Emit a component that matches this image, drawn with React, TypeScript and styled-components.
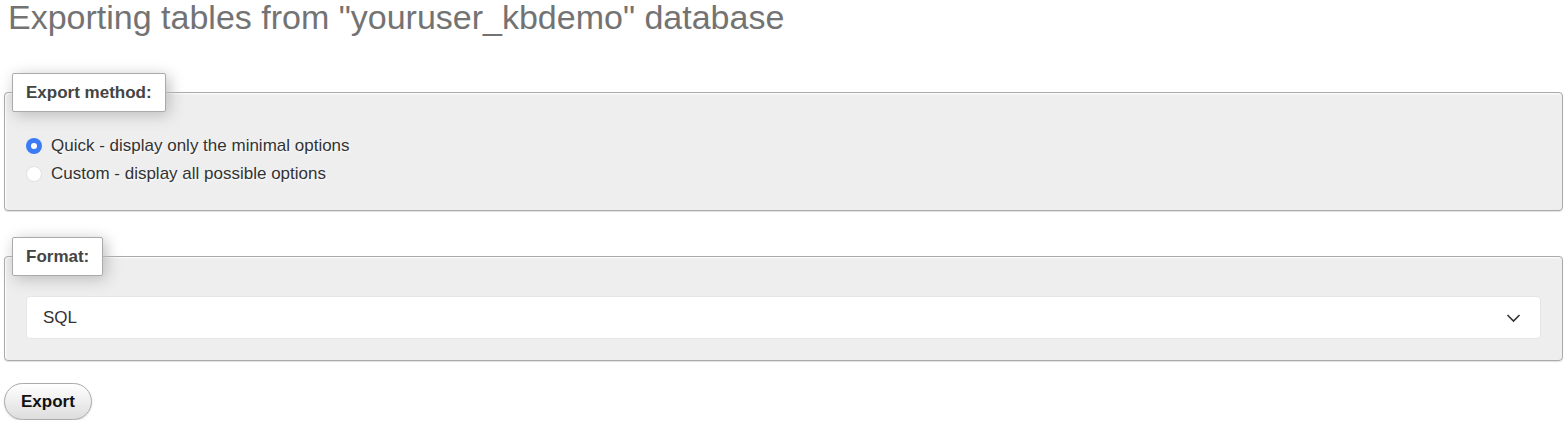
import React, { useState } from 'react';
import styled, { createGlobalStyle } from 'styled-components';

const GlobalStyle = createGlobalStyle`
    html, body {
        margin: 0;
        padding: 0;
        background: #fff;
    }
    body {
        font-family: "Liberation Sans", Arial, sans-serif;
        font-size: 17px;
        color: #333;
    }
`;

const Page = styled.div`
    padding: 0 4px;
`;

const Title = styled.h2`
    margin: 0 0 0 4px;
    font-size: 34px;
    font-weight: normal;
    line-height: 34px;
    color: #737373;
`;

const Panel = styled.fieldset<{ top: number }>`
    margin: ${({ top }) => top}px 0 0 0;
    padding: 12px 21px 21px 21px;
    border: 1px solid #aaa;
    border-radius: 4px;
    background: #eee;
    box-shadow: 1px 1px 2px #fff inset, 0 1px 1px rgba(0, 0, 0, 0.12);
    min-width: 0;
`;

const PanelTitle = styled.legend`
    margin-left: -14px;
    padding: 10px 13px 9px 13px;
    border: 1px solid #aaa;
    border-radius: 2px;
    background: #fff;
    box-shadow: 3px 3px 15px #bbb;
    font-weight: bold;
    font-size: 17px;
    line-height: 18px;
    color: #444;
`;

const OptionList = styled.div`
    display: flex;
    flex-direction: column;
    padding-top: 8px;
    padding-bottom: 1px;
`;

const OptionRow = styled.label`
    display: flex;
    align-items: center;
    gap: 9px;
    height: 28px;
    cursor: pointer;
    text-shadow: 1px 1px 2px #fff;
`;

const RadioDot = styled.span<{ checked: boolean }>`
    box-sizing: border-box;
    width: 16px;
    height: 16px;
    border-radius: 50%;
    flex: none;
    background: ${({ checked }) => (checked ? '#3b7cf5' : '#fff')};
    border: ${({ checked }) => (checked ? 'none' : '1px solid #e2e2e2')};
    display: flex;
    align-items: center;
    justify-content: center;

    &::after {
        content: '';
        width: 6px;
        height: 6px;
        border-radius: 50%;
        background: #fff;
        display: ${({ checked }) => (checked ? 'block' : 'none')};
    }
`;

const SelectBox = styled.div`
    margin-top: 8px;
    height: 43px;
    box-sizing: border-box;
    display: flex;
    align-items: center;
    justify-content: space-between;
    padding: 0 19px 0 16px;
    background: #fff;
    border: 1px solid #e6e6e6;
    border-radius: 4px;
    color: #333;
`;

const Chevron = styled.svg`
    width: 15px;
    height: 15px;
`;

const ExportButton = styled.button`
    margin-top: 22px;
    height: 37px;
    padding: 0 16px;
    font-family: "Liberation Sans", Arial, sans-serif;
    font-size: 17px;
    font-weight: bold;
    color: #111;
    border: 1px solid #aaa;
    border-radius: 20px;
    background: linear-gradient(#fff, #ddd);
    box-shadow: 0 1px 2px rgba(0, 0, 0, 0.15);
    cursor: pointer;
`;

const options = [
    { id: 'quick', label: 'Quick - display only the minimal options' },
    { id: 'custom', label: 'Custom - display all possible options' },
];

const App: React.FC = () => {
    const [method, setMethod] = useState('quick');

    return (
        <>
            <GlobalStyle />
            <Page>
                <Title>Exporting tables from "youruser_kbdemo" database</Title>
                <Panel top={39}>
                    <PanelTitle>Export method:</PanelTitle>
                    <OptionList>
                        {options.map((o) => (
                            <OptionRow key={o.id} onClick={() => setMethod(o.id)}>
                                <RadioDot checked={method === o.id} />
                                {o.label}
                            </OptionRow>
                        ))}
                    </OptionList>
                </Panel>
                <Panel top={26}>
                    <PanelTitle>Format:</PanelTitle>
                    <SelectBox>
                        <span>SQL</span>
                        <Chevron viewBox="0 0 15 15">
                            <polyline points="1.5,5 7.5,11 13.5,5" fill="none" stroke="#333" strokeWidth="1.6" />
                        </Chevron>
                    </SelectBox>
                </Panel>
                <ExportButton>Export</ExportButton>
            </Page>
        </>
    );
};

export default App;
